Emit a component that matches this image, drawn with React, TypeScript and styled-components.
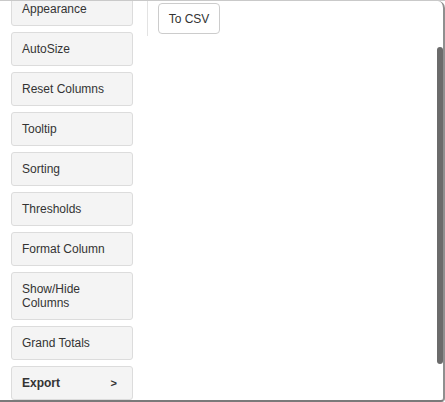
import React from 'react'
import styled, { createGlobalStyle } from 'styled-components'

const GlobalStyle = createGlobalStyle`
  html, body {
    margin: 0;
    padding: 0;
    background: #ffffff;
  }
  body {
    font-family: "Liberation Sans", Arial, sans-serif;
  }
`

const MENU_ITEMS = [
  'Appearance',
  'AutoSize',
  'Reset Columns',
  'Tooltip',
  'Sorting',
  'Thresholds',
  'Format Column',
  'Show/Hide Columns',
  'Grand Totals',
]

const App = () => {
  return (
    <>
      <GlobalStyle />
      <Page>
        <Panel>
          <SideMenu>
            <MenuList>
              {MENU_ITEMS.map((item) => (
                <MenuButton key={item}>{item}</MenuButton>
              ))}
              <MenuButton $active>
                Export
                <Arrow>&gt;</Arrow>
              </MenuButton>
            </MenuList>
          </SideMenu>
          <SubMenu>
            <ActionButton>To CSV</ActionButton>
          </SubMenu>
          <Spacer />
          <ScrollTrack>
            <ScrollThumb />
          </ScrollTrack>
        </Panel>
      </Page>
    </>
  )
}

export default App

const Page = styled.div`
  width: 445px;
  height: 402px;
  border-top: 1px solid #c9c9c9;
  box-sizing: border-box;
`

const Panel = styled.div`
  display: flex;
  align-items: flex-start;
  width: 445px;
  height: 401px;
  background: #ffffff;
  border-right: 2px solid #8f8f8f;
  border-bottom: 2px solid #7a7a7a;
  border-radius: 0 7px 4px 0;
  box-sizing: border-box;
  overflow: hidden;
`

const SideMenu = styled.div`
  width: 147px;
  height: 100%;
  overflow: hidden;
  flex-shrink: 0;
`

const MenuList = styled.div`
  display: flex;
  flex-direction: column;
  gap: 6px;
  margin-top: -9px;
  padding-left: 11px;
`

const MenuButton = styled.div<{ $active?: boolean }>`
  display: flex;
  align-items: center;
  justify-content: space-between;
  width: 122px;
  min-height: 34px;
  box-sizing: border-box;
  padding: 9px ${(p) => (p.$active ? '15px' : '24px')} 9px 10px;
  background: #f4f4f4;
  border: 1px solid #dcdcdc;
  border-radius: 3px;
  color: #333333;
  font-size: 12px;
  line-height: 14px;
  font-weight: ${(p) => (p.$active ? 'bold' : 'normal')};
`

const Arrow = styled.span`
  font-weight: bold;
  font-size: 11px;
`

const SubMenu = styled.div`
  height: 35px;
  border-left: 1px solid #e3e3e3;
  padding: 2px 0 0 10px;
  box-sizing: border-box;
`

const ActionButton = styled.div`
  display: flex;
  align-items: center;
  justify-content: center;
  width: 62px;
  height: 31px;
  box-sizing: border-box;
  background: #ffffff;
  border: 1px solid #cccccc;
  border-radius: 4px;
  color: #333333;
  font-size: 12px;
`

const Spacer = styled.div`
  flex: 1;
`

const ScrollTrack = styled.div`
  width: 6px;
  padding-top: 46px;
  margin-right: 0px;
`

const ScrollThumb = styled.div`
  width: 6px;
  height: 317px;
  background: #6b6b6b;
  border-radius: 3px;
`
